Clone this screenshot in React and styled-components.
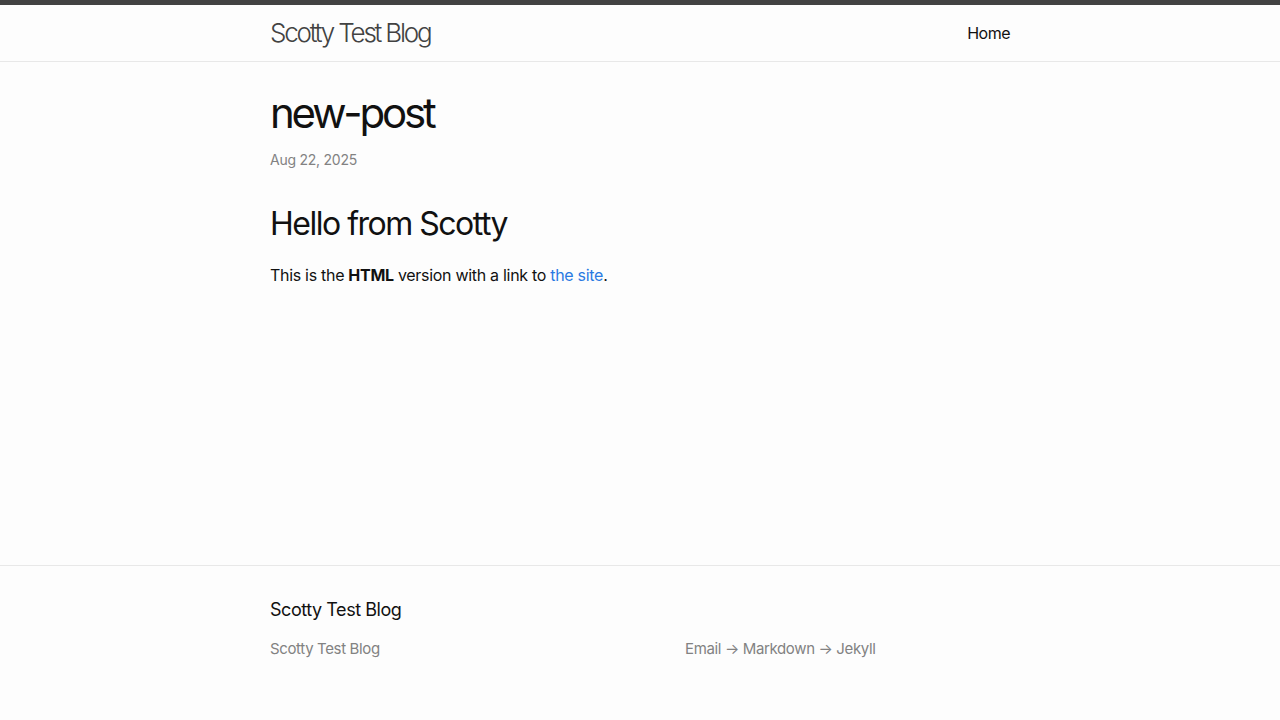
import React from 'react';
import styled, { createGlobalStyle } from 'styled-components';

const GlobalStyle = createGlobalStyle`
  html, body {
    margin: 0;
    padding: 0;
  }
  body {
    background-color: #fdfdfd;
    color: #111;
    font-family: Inter, "Noto Sans", "Liberation Sans", sans-serif;
    font-size: 16px;
    line-height: 1.5;
    letter-spacing: -0.3px;
    -webkit-font-smoothing: antialiased;
  }
  * {
    box-sizing: border-box;
  }
`;

const Site = styled.div`
  display: flex;
  flex-direction: column;
  min-height: 100vh;
`;

// Centered column, 740px wide, the same for header, main and footer
const Wrapper = styled.div`
  width: 740px;
  margin: 0 auto;
`;

const Header = styled.header`
  border-top: 5px solid #424242;
  border-bottom: 1px solid #e8e8e8;
  min-height: 62px;
`;

const HeaderBar = styled(Wrapper)`
  display: flex;
  justify-content: space-between;
  align-items: center;
  height: 56px;
`;

const SiteTitle = styled.a`
  font-size: 26px;
  font-weight: 300;
  letter-spacing: -2.2px;
  line-height: 54px;
  color: #424242;
  text-decoration: none;
`;

const Nav = styled.nav`
  display: flex;
  gap: 20px;
`;

const PageLink = styled.a`
  color: #111;
  line-height: 54px;
  letter-spacing: -0.5px;
  text-decoration: none;
`;

const Main = styled.main`
  flex: 1;
  padding: 30px 0;
`;

const PostHeader = styled.header`
  margin-bottom: 30px;
`;

const PostTitle = styled.h1`
  font-size: 42px;
  font-weight: 400;
  letter-spacing: -3.2px;
  line-height: 1;
  margin: 0 0 15px;
`;

const PostMeta = styled.p`
  font-size: 14px;
  letter-spacing: -0.25px;
  color: #828282;
  margin: 0;
`;

const Heading = styled.h2`
  font-size: 32px;
  font-weight: 400;
  line-height: 1.5;
  margin: 0 0 15px;
  letter-spacing: -1.5px;
`;

const Paragraph = styled.p`
  margin: 0 0 15px;
`;

const Link = styled.a`
  color: #2a7ae2;
  text-decoration: none;
`;

const Footer = styled.footer`
  border-top: 1px solid #e8e8e8;
  padding: 30px 0 60px;
`;

const FooterHeading = styled.h2`
  font-size: 18px;
  font-weight: 400;
  line-height: 1.5;
  letter-spacing: -0.45px;
  margin: 0 0 15px;
`;

const FooterCols = styled.div`
  display: grid;
  grid-template-columns: 415px 1fr;
  font-size: 15px;
  letter-spacing: -0.36px;
  color: #828282;
  line-height: 1.5;
`;

const FooterCol = styled.p`
  margin: 0;
`;

export default function App() {
  return (
    <Site>
      <GlobalStyle />
      <Header>
        <HeaderBar>
          <SiteTitle href="#">Scotty Test Blog</SiteTitle>
          <Nav>
            <PageLink href="#">Home</PageLink>
          </Nav>
        </HeaderBar>
      </Header>

      <Main>
        <Wrapper>
          <PostHeader>
            <PostTitle>new-post</PostTitle>
            <PostMeta>Aug 22, 2025</PostMeta>
          </PostHeader>
          <Heading>Hello from Scotty</Heading>
          <Paragraph>
            This is the <strong>HTML</strong> version with a link to <Link href="#">the site</Link>.
          </Paragraph>
        </Wrapper>
      </Main>

      <Footer>
        <Wrapper>
          <FooterHeading>Scotty Test Blog</FooterHeading>
          <FooterCols>
            <FooterCol>Scotty Test Blog</FooterCol>
            <FooterCol>Email → Markdown → Jekyll</FooterCol>
          </FooterCols>
        </Wrapper>
      </Footer>
    </Site>
  );
}
